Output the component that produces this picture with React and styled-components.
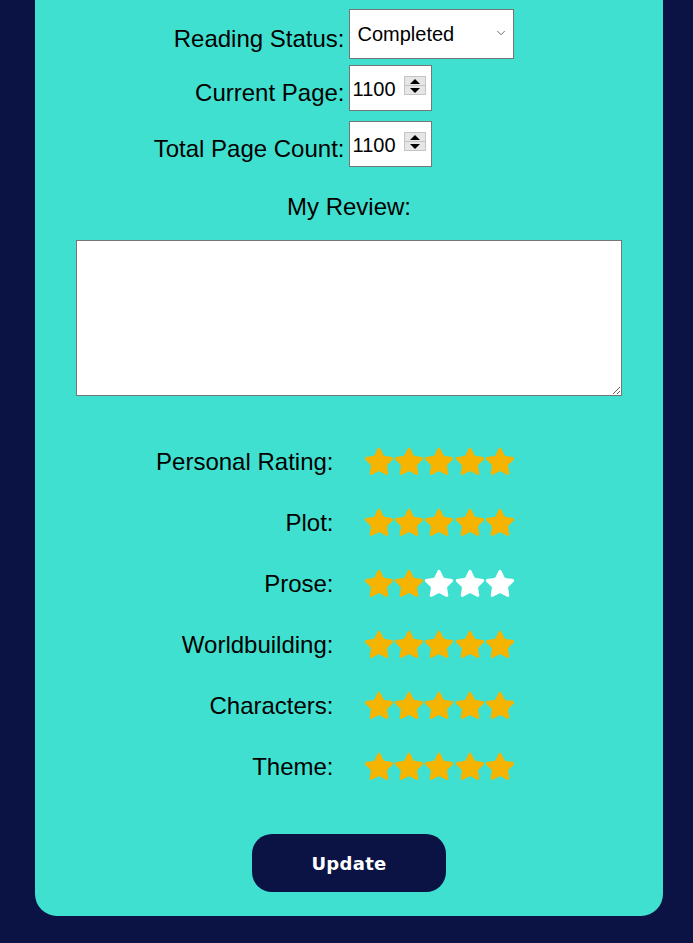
import React, { useState } from "react";
import styled, { createGlobalStyle } from "styled-components";
import { Star, ChevronDown } from "lucide-react";

const GlobalStyle = createGlobalStyle`
  body {
    margin: 0;
    background-color: #0b1344;
    font-family: "Liberation Sans", Arial, sans-serif;
  }
`;

const Page = styled.div`
  padding: 0 30px 27px 35px;
`;

const Card = styled.div`
  width: 628px;
  box-sizing: border-box;
  background-color: #40e0d0;
  border-radius: 0 0 22px 22px;
  padding: 9px 41px 24px;
  display: flex;
  flex-direction: column;
  align-items: center;
`;

const Field = styled.div`
  display: grid;
  grid-template-columns: 1fr 1fr;
  column-gap: 4px;
  align-items: center;
  width: 100%;
  padding-right: 5px;
  box-sizing: border-box;
  margin-top: ${({ $top }) => $top || 0}px;
`;

const Label = styled.label`
  font-size: 24px;
  color: #000;
  text-align: right;
  white-space: nowrap;
  padding-top: 10px;
`;

const Control = styled.div`
  position: relative;
  width: ${({ $w }) => $w}px;
  height: ${({ $h }) => $h}px;
`;

const Select = styled.select`
  appearance: none;
  width: 100%;
  height: 100%;
  box-sizing: border-box;
  border: 1px solid #767676;
  border-radius: 0;
  background: #fff;
  font-family: "Liberation Sans", Arial, sans-serif;
  font-size: 20px;
  color: #000;
  padding: 0 0 0 8px;
  outline: none;
`;

const Caret = styled(ChevronDown)`
  position: absolute;
  right: 6px;
  top: 17px;
  pointer-events: none;
  color: #333;
`;

const NumberInput = styled.input`
  width: 100%;
  height: 100%;
  box-sizing: border-box;
  border: 1px solid #767676;
  background: #fff;
  font-family: "Liberation Sans", Arial, sans-serif;
  font-size: 20px;
  color: #000;
  padding: 3px 3px 0 3px;
  outline: none;
  -moz-appearance: textfield;

  &::-webkit-inner-spin-button,
  &::-webkit-outer-spin-button {
    -webkit-appearance: none;
    margin: 0;
  }
`;

const Spinner = styled.div`
  position: absolute;
  right: 6px;
  top: 11px;
  width: 22px;
  height: 19px;
  box-sizing: border-box;
  border: 1px solid #c4c4c4;
  background: #e6e6e6;
  display: flex;
  flex-direction: column;
  pointer-events: none;
`;

const SpinHalf = styled.div`
  flex: 1;
  display: flex;
  align-items: center;
  justify-content: center;
  border-top: ${({ $down }) => ($down ? "1px solid #c4c4c4" : "none")};

  &::after {
    content: "";
    width: 0;
    height: 0;
    border-left: 5px solid transparent;
    border-right: 5px solid transparent;
    ${({ $down }) =>
      $down ? "border-top: 5px solid #000;" : "border-bottom: 5px solid #000;"}
  }
`;

const ReviewLabel = styled.div`
  font-size: 24px;
  line-height: 28px;
  color: #000;
  margin-top: 26px;
`;

const Review = styled.textarea`
  width: 546px;
  height: 156px;
  box-sizing: border-box;
  margin-top: 19px;
  border: 1px solid #767676;
  background: #fff;
  font-family: "Liberation Sans", Arial, sans-serif;
  font-size: 16px;
  resize: both;
  outline: none;
`;

const Ratings = styled.div`
  display: grid;
  grid-template-columns: 1fr 1fr;
  grid-auto-rows: 61px;
  column-gap: 31px;
  align-items: center;
  width: 100%;
  margin-top: 35px;
`;

const RatingLabel = styled.div`
  font-size: 24px;
  color: #000;
  text-align: right;
`;

const Stars = styled.div`
  display: flex;
  gap: 0;
  margin-left: -2px;
`;

const StarIcon = styled(Star)`
  display: block;
  flex: none;
  margin-right: -1.6px;
`;

const Button = styled.button`
  margin-top: 37px;
  width: 194px;
  height: 58px;
  border: none;
  border-radius: 20px;
  background-color: #0b1344;
  color: #fff;
  font-family: "DejaVu Sans", Verdana, sans-serif;
  font-weight: 700;
  font-size: 18px;
  letter-spacing: 0.3px;
  cursor: pointer;
`;

const ratings = [
  { name: "Personal Rating", value: 5 },
  { name: "Plot", value: 5 },
  { name: "Prose", value: 2 },
  { name: "Worldbuilding", value: 5 },
  { name: "Characters", value: 5 },
  { name: "Theme", value: 5 },
];

const StarRow = ({ value }) => (
  <Stars>
    {[1, 2, 3, 4, 5].map((n) => {
      const color = n <= value ? "#f4b400" : "#ffffff";
      return (
        <StarIcon
          key={n}
          size={32}
          fill={color}
          color={color}
          strokeWidth={1.2}
        />
      );
    })}
  </Stars>
);

const PageInput = ({ value, onChange }) => (
  <Control $w={83} $h={46}>
    <NumberInput type="number" value={value} onChange={onChange} />
    <Spinner>
      <SpinHalf />
      <SpinHalf $down />
    </Spinner>
  </Control>
);

const App = () => {
  const [status, setStatus] = useState("Completed");
  const [current, setCurrent] = useState(1100);
  const [total, setTotal] = useState(1100);

  return (
    <Page>
      <GlobalStyle />
      <Card>
        <Field>
          <Label>Reading Status:</Label>
          <Control $w={165} $h={50}>
            <Select value={status} onChange={(e) => setStatus(e.target.value)}>
              <option>Want to Read</option>
              <option>Reading</option>
              <option>Completed</option>
            </Select>
            <Caret size={14} strokeWidth={1.2} />
          </Control>
        </Field>
        <Field $top={6}>
          <Label>Current Page:</Label>
          <PageInput value={current} onChange={(e) => setCurrent(e.target.value)} />
        </Field>
        <Field $top={10}>
          <Label>Total Page Count:</Label>
          <PageInput value={total} onChange={(e) => setTotal(e.target.value)} />
        </Field>
        <ReviewLabel>My Review:</ReviewLabel>
        <Review />
        <Ratings>
          {ratings.map((r) => (
            <React.Fragment key={r.name}>
              <RatingLabel>{r.name}:</RatingLabel>
              <StarRow value={r.value} />
            </React.Fragment>
          ))}
        </Ratings>
        <Button>Update</Button>
      </Card>
    </Page>
  );
};

export default App;
